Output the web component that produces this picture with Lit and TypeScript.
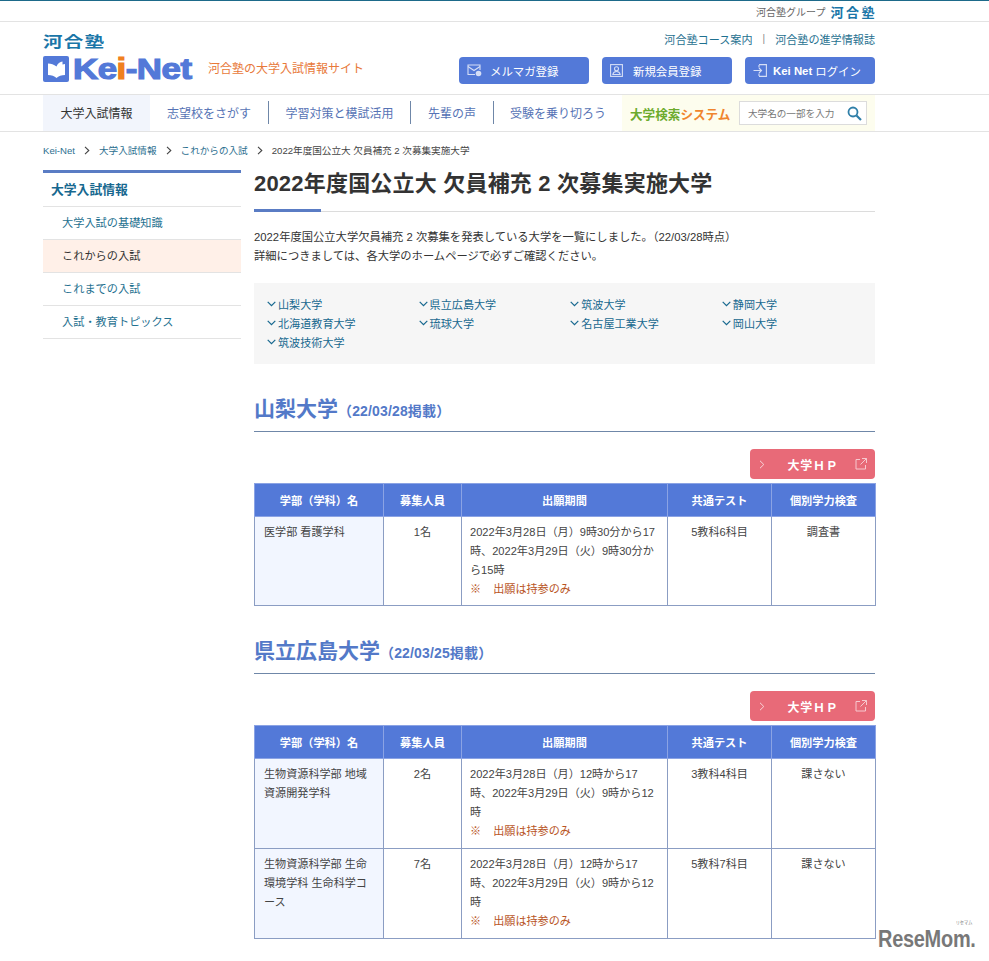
import { LitElement, html, css } from "lit";
import { customElement } from "lit/decorators.js";

const SANS = css`"Liberation Sans", "Noto Sans CJK JP", sans-serif`;

const chevronDown = html`<svg class="cd" width="9" height="6" viewBox="0 0 9 6"><path d="M.7.8l3.800 3.900L8.300.8" fill="none" stroke="#17688f" stroke-width="1.200"/></svg>`;
const crumbArrow = html`<svg class="ca" width="6" height="9" viewBox="0 0 6 9"><path d="M1 .8l3.800 3.700L1 8.200" fill="none" stroke="#444" stroke-width="1.100"/></svg>`;
const extIcon = html`<svg width="12" height="12" viewBox="0 0 12 12" fill="none" stroke="#f6c9cf" stroke-width="1"><path d="M5 1.500H1v9.500h9.500V7"/><path d="M7 .5h4.500V5M11.500.5L5.500 6.500"/></svg>`;

const toc = ["山梨大学","県立広島大学","筑波大学","静岡大学","北海道教育大学","琉球大学","名古屋工業大学","岡山大学","筑波技術大学"];

interface Row { dept: string; n: string; period: string[]; test: string; ind: string; }
interface Uni { name: string; date: string; rows: Row[]; }
const hiroshimaPeriod = ["2022年3月28日（月）12時から17", "時、2022年3月29日（火）9時から12", "時"];
const unis: Uni[] = [
  { name: "山梨大学", date: "（22/03/28掲載）", rows: [
    { dept: "医学部 看護学科", n: "1名", period: ["2022年3月28日（月）9時30分から17", "時、2022年3月29日（火）9時30分か", "ら15時"], test: "5教科6科目", ind: "調査書" },
  ]},
  { name: "県立広島大学", date: "（22/03/25掲載）", rows: [
    { dept: "生物資源科学部 地域資源開発学科", n: "2名", period: hiroshimaPeriod, test: "3教科4科目", ind: "課さない" },
    { dept: "生物資源科学部 生命環境学科 生命科学コース", n: "7名", period: hiroshimaPeriod, test: "5教科7科目", ind: "課さない" },
  ]},
];

@customElement("app-root")
export class AppRoot extends LitElement {
  static styles = css`
    :host { display: block; position: relative; height: 961px; overflow: hidden; background: #fff; color: #333; font-family: ${SANS}; font-size: 12px; }
    a { color: inherit; text-decoration: none; }
    .wrap { width: 832px; margin-left: 43px; }
    .top { height: 20px; border-top: 1px solid #1d6a8a; border-bottom: 1px solid #e3e3e3; }
    .top .wrap { display: flex; justify-content: flex-end; align-items: center; height: 20px; gap: 5px; font-size: 10px; color: #666; }
    .top b { color: #1a76a8; font-size: 13px; letter-spacing: 2.500px; margin-right: -2px; }
    .head { height: 72px; border-bottom: 1px solid #e3e3e3; }
    .head .wrap { display: flex; justify-content: space-between; height: 72px; }
    .brand { padding-top: 12px; }
    .brand .kawai { color: #1a76a8; font-weight: 700; font-size: 15px; line-height: 16px; letter-spacing: 1px; transform: scaleX(1.3); transform-origin: left; }
    .logo { display: flex; align-items: center; height: 26px; margin-top: 6px; }
    .logo .book { width: 26px; height: 26px; background: #5379d8; border-radius: 2px; display: flex; align-items: center; justify-content: center; margin-right: 4px; }
    .logo .kn { display: block; width: 120px; white-space: nowrap; font-family: "Liberation Sans", sans-serif; font-weight: 700; font-size: 29px; letter-spacing: -.4px; color: #5379d8; line-height: 26px; -webkit-text-stroke: 1.200px #5379d8; transform: scaleX(1.2); transform-origin: left; }
    .logo .kn i { font-style: normal; color: #f08020; -webkit-text-stroke: 1.200px #f08020; }
    .logo .tag { color: #e8793a; font-size: 12px; margin-left: 15px; margin-top: -4px; white-space: nowrap; }
    .hr { text-align: right; }
    .links { display: flex; justify-content: flex-end; align-items: center; height: 17px; margin-top: 8px; color: #1f7190; font-size: 11.100px; }
    .links .sep { margin: 0 10px; color: #888; font-size: 10px; }
    .btns { display: flex; gap: 13px; margin-top: 10px; }
    .btn { width: 130px; height: 27px; box-sizing: border-box; background: #5379d8; color: #fff; border-radius: 4px; display: flex; align-items: center; font-size: 11.400px; padding-left: 8px; }
    .btn svg { flex: none; margin-right: 8px; }
    .btn.user svg { margin-right: 10px; }
    .btn.login b { font-weight: 700; margin-right: 3px; }
    .btn.login svg { margin-right: 6px; }
    nav { height: 36px; border-bottom: 1px solid #e3e3e3; }
    nav .wrap { display: flex; height: 36px; align-items: center; }
    nav .cur { width: 107px; height: 36px; background: #f2f5fc; color: #333; font-size: 12px; display: flex; align-items: center; justify-content: center; padding-bottom: 1px; box-sizing: border-box; }
    nav .it { height: 23px; margin-top: -2px; display: flex; align-items: center; justify-content: center; color: #5673b5; font-size: 12px; border-right: 1px solid #6f87a8; box-sizing: border-box; }
    nav .it.last { border: 0; }
    .search { margin-left: auto; width: 253px; height: 36px; background: #fdfdee; display: flex; align-items: center; box-sizing: border-box; padding-left: 8px; }
    .search .ttl { font-weight: 700; font-size: 12.600px; color: #6cab2d; width: 109px; white-space: nowrap; }
    .search .ttl span { color: #f0852d; }
    .search .box { width: 128px; height: 24px; box-sizing: border-box; border: 1px solid #dcdcdc; background: #fff; display: flex; align-items: center; justify-content: space-between; padding: 0 4px 0 8px; font-size: 9.600px; color: #777; }
    .crumb { height: 38px; box-sizing: border-box; padding-bottom: 2px; display: flex; align-items: center; font-size: 9.600px; color: #2d6f8f; }
    .crumb .ca { margin: 0 9px; }
    .crumb .now { color: #444; }
    .cols { display: flex; gap: 13px; }
    aside { width: 198px; flex: none; }
    .sh { border-top: 3px solid #5a7cc4; border-bottom: 1px solid #e3e3e3; height: 31px; padding-bottom: 2px; display: flex; align-items: center; padding-left: 8px; color: #17688f; font-size: 12.800px; font-weight: 700; }
    .si { height: 30px; padding-bottom: 2px; border-bottom: 1px solid #e3e3e3; display: flex; align-items: center; padding-left: 19px; color: #1f7190; font-size: 11.200px; }
    .si.on { background: #fff0e8; color: #333; }
    main { width: 621px; flex: none; }
    h1 { margin: 0; font-size: 22px; line-height: 28px; font-weight: 700; color: #333; letter-spacing: .2px; }
    .rule { height: 1px; background: #dcdcdc; margin-top: 13px; position: relative; }
    .rule::before { content: ""; position: absolute; left: 0; top: -2px; width: 67px; height: 3px; background: #5a7cc4; }
    .lead { margin: 16px 0 0; line-height: 19px; font-size: 11.300px; color: #333; }
    .toc { margin-top: 17px; height: 81px; background: #f6f6f6; box-sizing: border-box; padding: 11px 13px 0; display: grid; grid-template-columns: repeat(4, 151.600px); grid-auto-rows: 19px; color: #17688f; font-size: 11.100px; align-items: center; }
    .toc a { display: flex; align-items: center; gap: 2px; }
    h2 { margin: 33px 0 0; height: 34px; box-sizing: content-box; border-bottom: 1px solid #6f87a8; font-size: 21px; line-height: 24px; color: #5379c8; font-weight: 700; }
    h2 small { font-size: 14px; font-weight: 700; letter-spacing: .15px; }
    .hpw { display: flex; justify-content: flex-end; margin-top: 17px; }
    .hp { width: 125px; height: 30px; background: #e86a78; color: #fff; border-radius: 4px; display: flex; align-items: center; box-sizing: border-box; padding: 0 8px 0 9px; font-weight: 700; font-size: 12px; }
    .hp .label { flex: 1; text-align: center; letter-spacing: .8px; padding-left: 6px; }
    table { width: 621px; table-layout: fixed; border-collapse: collapse; margin-top: 4px; font-size: 11.100px; color: #444; }
    th, td { border: 1px solid #8b9dc3; }
    th { background: #5379d8; color: #fff; height: 32px; padding: 0; font-size: 11.200px; font-weight: 700; border-color: #8ba3e4; }
    td { vertical-align: top; text-align: center; padding: 6px 8px 6px; line-height: 19px; }
    .uni + .uni td { padding-bottom: 7px; }
    td.l { text-align: left; white-space: nowrap; }
    td.d { background: #f2f6ff; padding-left: 9px; padding-right: 9px; white-space: normal; }
    .note { color: #b8541e; }
    .note span { margin-right: 9px; }
    .mark { position: absolute; right: 13px; top: 930px; font-weight: 700; font-size: 24px; line-height: 17px; color: #787878; letter-spacing: -.3px; transform: scaleX(.83); transform-origin: right; white-space: nowrap; }
    .mark small { position: absolute; right: 4px; top: -11px; font-size: 5px; line-height: 6px; letter-spacing: 0; font-weight: 400; }
  `;

  private btnIcon(kind: string) {
    if (kind === "mail") return html`<svg width="15" height="13" viewBox="0 0 15 13" fill="none" stroke="#d5def6" stroke-width="1.100"><path d="M13 6V1H1v9.500h7"/><path d="M1 2.500l6 4 6-4"/><circle cx="11.500" cy="9.500" r="2.800" fill="#d5def6" stroke="none"/></svg>`;
    if (kind === "user") return html`<svg width="13" height="13" viewBox="0 0 13 13" fill="none" stroke="#d5def6" stroke-width="1.100"><rect x=".6" y=".6" width="11.800" height="11.800"/><circle cx="6.500" cy="4.800" r="2"/><path d="M2.800 10.500c.4-2 2-3 3.700-3s3.300 1 3.700 3z"/></svg>`;
    return html`<svg width="14" height="13" viewBox="0 0 14 13" fill="none" stroke="#d5def6" stroke-width="1.100"><path d="M6 .6h7.400v11.800H6M6 1v2.500M6 9.500V12"/><path d="M.5 6.500h8M6 4l2.500 2.500L6 9"/></svg>`;
  }

  private uni(u: Uni) {
    return html`<section class="uni">
      <h2>${u.name}<small>${u.date}</small></h2>
      <div class="hpw"><a class="hp" href="#">
        <svg width="6" height="9" viewBox="0 0 6 9"><path d="M1 .8l3.800 3.700L1 8.200" fill="none" stroke="#f8d4d8" stroke-width="1"/></svg>
        <span class="label">大学ＨＰ</span>${extIcon}</a></div>
      <table>
        <colgroup><col style="width:129px"><col style="width:78px"><col style="width:206px"><col style="width:104px"><col style="width:104px"></colgroup>
        <thead><tr><th>学部（学科）名</th><th>募集人員</th><th>出願期間</th><th>共通テスト</th><th>個別学力検査</th></tr></thead>
        <tbody>${u.rows.map(r => html`<tr>
          <td class="l d">${r.dept}</td><td>${r.n}</td>
          <td class="l">${r.period.map(p => html`${p}<br>`)}<span class="note"><span>※</span> 出願は持参のみ</span></td>
          <td>${r.test}</td><td>${r.ind}</td></tr>`)}</tbody>
      </table>
    </section>`;
  }

  render() {
    return html`
      <div class="top"><div class="wrap"><span>河合塾グループ</span><b>河合塾</b></div></div>
      <header class="head"><div class="wrap">
        <div class="brand">
          <div class="kawai">河合塾</div>
          <div class="logo">
            <span class="book"><svg width="19" height="19" viewBox="0 0 19 19"><path d="M1 3.500c3 0 6 1 8.500 3 1-3 3.500-4.500 6-5v3l2.500-.5V15c-3.500 0-6.500 1-8.500 3-2-2-5-3-8.500-3z" fill="#fff"/></svg></span>
            <span class="kn">Ke<i>i</i>-Net</span>
            <span class="tag">河合塾の大学入試情報サイト</span>
          </div>
        </div>
        <div class="hr">
          <div class="links"><a href="#">河合塾コース案内</a><span class="sep">|</span><a href="#">河合塾の進学情報誌</a></div>
          <div class="btns">
            <a class="btn" href="#">${this.btnIcon("mail")}メルマガ登録</a>
            <a class="btn user" href="#">${this.btnIcon("user")}新規会員登録</a>
            <a class="btn login" href="#">${this.btnIcon("login")}<b>Kei Net</b>ログイン</a>
          </div>
        </div>
      </div></header>
      <nav><div class="wrap">
        <a class="cur" href="#">大学入試情報</a>
        <a class="it" style="width:119px" href="#">志望校をさがす</a>
        <a class="it" style="width:142px" href="#">学習対策と模試活用</a>
        <a class="it" style="width:83px" href="#">先輩の声</a>
        <a class="it last" style="width:128px" href="#">受験を乗り切ろう</a>
        <div class="search">
          <span class="ttl">大学検索<span>システム</span></span>
          <div class="box"><span>大学名の一部を入力</span>
            <svg width="15" height="15" viewBox="0 0 15 15" fill="none" stroke="#2f7fa8" stroke-width="1.800"><circle cx="6" cy="6" r="4.500"/><path d="M9.500 9.500l4.500 4.500" stroke-width="2.200"/></svg></div>
        </div>
      </div></nav>
      <div class="wrap">
        <div class="crumb"><a href="#">Kei-Net</a>${crumbArrow}<a href="#">大学入試情報</a>${crumbArrow}<a href="#">これからの入試</a>${crumbArrow}<span class="now">2022年度国公立大 欠員補充 2 次募集実施大学</span></div>
        <div class="cols">
          <aside>
            <div class="sh">大学入試情報</div>
            <a class="si" href="#">大学入試の基礎知識</a>
            <a class="si on" href="#">これからの入試</a>
            <a class="si" href="#">これまでの入試</a>
            <a class="si" href="#">入試・教育トピックス</a>
          </aside>
          <main>
            <h1>2022年度国公立大 欠員補充 2 次募集実施大学</h1>
            <div class="rule"></div>
            <p class="lead">2022年度国公立大学欠員補充 2 次募集を発表している大学を一覧にしました。（22/03/28時点）<br>詳細につきましては、各大学のホームページで必ずご確認ください。</p>
            <div class="toc">${toc.map(t => html`<a href="#">${chevronDown}${t}</a>`)}</div>
            ${unis.map(u => this.uni(u))}
          </main>
        </div>
      </div>
      <div class="mark"><small>リセマム</small>ReseMom.</div>
    `;
  }
}
